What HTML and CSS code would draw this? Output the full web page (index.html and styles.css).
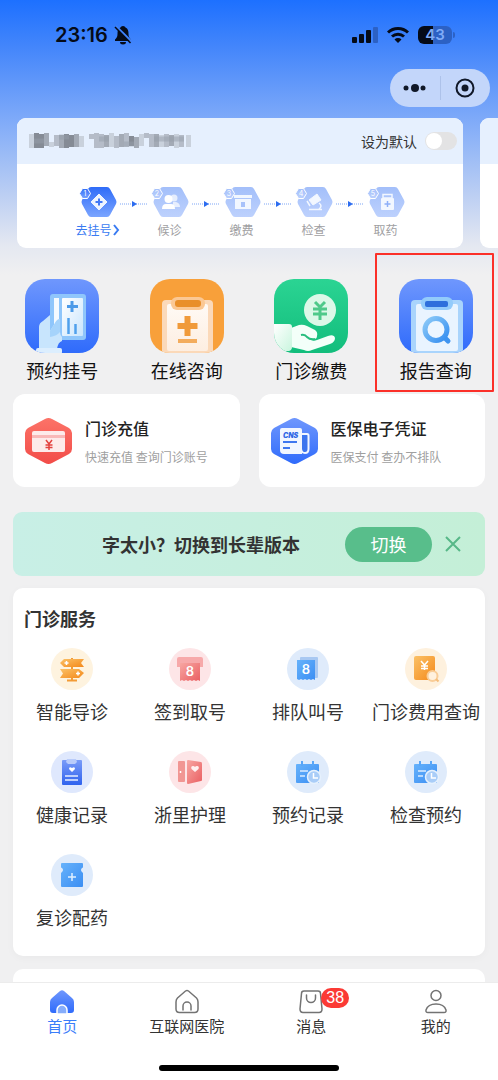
FILE: index.html
```html
<!DOCTYPE html>
<html lang="zh-CN">
<head>
    <meta charset="UTF-8">
    <meta name="viewport" content="width=device-width, initial-scale=1.0">
    <title>首页</title>
    <link rel="stylesheet" href="styles.css">
</head>
<body>
    <!-- 共用渐变 -->
    <svg class="defs" width="0" height="0" aria-hidden="true">
        <defs>
            <linearGradient id="gBlue" x1="0" y1="0" x2="0" y2="1"><stop offset="0" stop-color="#6f97fd"/><stop offset="1" stop-color="#2f6bfb"/></linearGradient>
            <linearGradient id="gStep" x1="0" y1="0" x2="0" y2="1"><stop offset="0" stop-color="#2f6cf8"/><stop offset="1" stop-color="#7ba5ff"/></linearGradient>
            <linearGradient id="gStepOff" x1="0" y1="0" x2="0" y2="1"><stop offset="0" stop-color="#a3bffa"/><stop offset="1" stop-color="#bdd1fd"/></linearGradient>
            <linearGradient id="gGreen" x1="0" y1="0" x2="0" y2="1"><stop offset="0" stop-color="#2bd493"/><stop offset="1" stop-color="#12bd7c"/></linearGradient>
            <linearGradient id="gOrange" x1="0" y1="0" x2="1" y2="1"><stop offset="0" stop-color="#fbc166"/><stop offset="1" stop-color="#f4891b"/></linearGradient>
            <linearGradient id="gRed" x1="0" y1="0" x2="0" y2="1"><stop offset="0" stop-color="#fc7368"/><stop offset="1" stop-color="#f24c48"/></linearGradient>
            <linearGradient id="gPink" x1="0" y1="0" x2="1" y2="1"><stop offset="0" stop-color="#f7a6a2"/><stop offset="1" stop-color="#ea5f62"/></linearGradient>
            <linearGradient id="gSky" x1="0" y1="0" x2="1" y2="1"><stop offset="0" stop-color="#66b2fb"/><stop offset="1" stop-color="#3b8ef3"/></linearGradient>
            <linearGradient id="gRoyal" x1="0" y1="0" x2="0" y2="1"><stop offset="0" stop-color="#7a9cf8"/><stop offset="1" stop-color="#2f62ee"/></linearGradient>
            <linearGradient id="gPaper" x1="0" y1="0" x2="1" y2="1"><stop offset="0" stop-color="#ffffff"/><stop offset="1" stop-color="#c9e5fd"/></linearGradient>
            <linearGradient id="gCream" x1="0" y1="0" x2="0" y2="1"><stop offset="0" stop-color="#fffaf5"/><stop offset="1" stop-color="#fdeee1"/></linearGradient>
            <linearGradient id="gCuff" x1="0" y1="0" x2="1" y2="1"><stop offset="0" stop-color="#ffffff"/><stop offset="1" stop-color="#c9f5de"/></linearGradient>
            <linearGradient id="gLens" x1="0" y1="0" x2="1" y2="1"><stop offset="0" stop-color="#8ccaf8"/><stop offset="1" stop-color="#358ef0"/></linearGradient>
            <clipPath id="tile"><rect width="74" height="74" rx="20"/></clipPath>
            <symbol id="arrow" viewBox="0 0 28 6"><path d="M0 3h28" stroke="#7da5f6" stroke-dasharray="1 1"/><path d="M12 0l5 3-5 3z" fill="#2c6cf0"/></symbol>
            <symbol id="hex" viewBox="0 0 38 32"><path d="M12 1h16q2 0 3 2l6 11q1 2 0 4l-6 11q-1 2-3 2H12q-2 0-3-2L3 18q-1-2 0-4l6-11q1-2 3-2z"/><path d="M3.500 2.500h5l3 5-3 5h-5l-3-5z" stroke="#fff"/></symbol>
            <symbol id="calendar" viewBox="0 0 42 42"><circle cx="21" cy="21" r="21" fill="#dfebfb"/><path d="M10 13h21q1 0 1 1v18H10q-1 0-1-1V14q0-1 1-1z" fill="url(#gSky)"/><path d="M15 10v5M26 10v5" stroke="#58a6f8" stroke-width="2"/><path d="M13 20h8M13 25h5" stroke="#d9ecff" stroke-width="1.500"/><circle cx="27" cy="26" r="6.500" fill="#a9cdf8" stroke="#e6f1fd" stroke-width="1.500"/><path d="M26.500 22v5H31" fill="none" stroke="#fff" stroke-width="1.500"/></symbol>
        </defs>
    </svg>

    <header class="top">
        <!-- 状态栏 -->
        <div class="status-bar">
            <span class="time">23:16</span>
            <svg class="bell" width="18" height="20" viewBox="0 0 18 20" aria-hidden="true">
                <path d="M9 1C7.500 1 7 2 6.500 2.500 4 3.500 3.500 6 3.500 9c0 3-1 4-2.500 5.500V16h16v-1.500c-1.500-1.500-2.500-2.500-2.500-5.500 0-3-.500-5.500-3-6.500C11 2 10.500 1 9 1zM6 17h6a3 2.500 0 0 1-6 0z"/>
                <path d="M2 1l16 16" stroke="#3f82fa" stroke-width="2"/>
                <path d="M1 2l15.500 16" stroke="#050b18" stroke-width="1.500"/>
            </svg>
            <div class="signals">
                <svg width="26" height="18" viewBox="0 0 26 18" aria-hidden="true">
                    <rect x="0" y="11" width="5" height="6" rx="1"/><rect x="7" y="8" width="5" height="9" rx="1"/><rect x="14" y="4" width="5" height="13" rx="1"/><rect x="21" y="1" width="5" height="16" rx="1" fill="#2c61c4"/>
                </svg>
                <svg width="22" height="18" viewBox="0 0 22 18" fill="none" stroke="#050b18" stroke-width="3" aria-hidden="true">
                    <path d="M1 6.500a14.500 14.500 0 0 1 20 0M5 10.500a9 9 0 0 1 12 0"/><path d="M11 17l-3.500-3.500a5 5 0 0 1 7 0z" fill="#050b18" stroke="none"/>
                </svg>
                <span class="battery">43</span>
            </div>
        </div>
        <div class="capsule">
            <button type="button" aria-label="更多">
                <svg width="24" height="10" viewBox="0 0 24 10"><circle cx="3" cy="5" r="2.500"/><circle cx="12" cy="5" r="4"/><circle cx="20" cy="5" r="2.500"/></svg>
            </button>
            <button type="button" aria-label="关闭">
                <svg width="20" height="20" viewBox="0 0 20 20"><circle cx="10" cy="10" r="8.500" fill="none" stroke="#101828" stroke-width="2"/><circle cx="10" cy="10" r="3.500"/></svg>
            </button>
        </div>
    </header>

    <main>
        <!-- 就诊人卡片 -->
        <section class="patients">
            <article class="patient">
                <div class="patient-head">
                    <svg class="masked" width="162" height="16" viewBox="0 0 162 16" role="img" aria-label="就诊人">
                        <g fill="none" stroke-width="5">
                            <path d="M2.500 1v14M22.500 9v5M52.500 3v11M82.500 0v14M112.500 1v12M132.500 2v12M147.500 1v14M159.500 2v12" stroke="#c9d1dc"/>
                            <path d="M7.500 0v15M12.500 1v14M37.500 1v14M42.500 2v12M102.500 3v10" stroke="#858b95"/>
                            <path d="M17.500 0v13M32.500 2v13M47.500 1v13M77.500 2v12M92.500 1v13M107.500 4v11M127.500 1v13M142.500 2v11" stroke="#a3aab5"/>
                            <path d="M27.500 2v11M62.500 1v5M67.500 0v15M72.500 1v14M87.500 3v12M97.500 0v14M117.500 0v5M122.500 1v13M137.500 1v13M152.500 2v12" stroke="#b5bcc8"/>
                            <path d="M5 8h10M30 4h10M70 6h10M95 11h10M125 6h30" stroke="#969da9" stroke-opacity=".5"/>
                        </g>
                    </svg>
                    <label class="default-switch">设为默认 <input type="checkbox" role="switch"></label>
                </div>
                <ol class="steps">
                    <li class="active">
                        <svg width="38" height="32" viewBox="0 0 38 32" aria-hidden="true"><use href="#hex" fill="url(#gStep)"/><text class="num" x="6" y="10">1</text><path d="M20 8l8 8-8 8-8-8z" fill="#eef4ff" stroke="#eef4ff" stroke-linejoin="round"/><path d="M20 12.500v7M16.500 16h7" stroke="#4379f5" stroke-width="2"/></svg>
                        <a href="#">去挂号<svg width="8" height="12" viewBox="0 0 8 12" fill="none" stroke="#3a7bf2" stroke-width="2"><path d="M2 1l4 5-4 5"/></svg></a>
                    </li>
                    <li class="line"><svg width="28" height="6"><use href="#arrow"/></svg></li>
                    <li>
                        <svg width="38" height="32" viewBox="0 0 38 32" aria-hidden="true"><use href="#hex" fill="url(#gStepOff)"/><text class="num" x="6" y="10">2</text><g fill="#fff"><g opacity=".7"><circle cx="23" cy="12" r="3.500"/><path d="M22 16h3q4 1 4 5h-7z"/></g><circle cx="17.500" cy="13" r="4"/><path d="M11 23q0-5 4-5h5q4 0 4 5z"/></g></svg>
                        <span>候诊</span>
                    </li>
                    <li class="line"><svg width="28" height="6"><use href="#arrow"/></svg></li>
                    <li>
                        <svg width="38" height="32" viewBox="0 0 38 32" aria-hidden="true"><use href="#hex" fill="url(#gStepOff)"/><text class="num" x="6" y="10">3</text><path d="M11 9h18v3H11zM12 13h16v10H12z" fill="#f2f7ff"/><path d="M18 16h4v5h-4z" fill="#a8c2fa"/></svg>
                        <span>缴费</span>
                    </li>
                    <li class="line"><svg width="28" height="6"><use href="#arrow"/></svg></li>
                    <li>
                        <svg width="38" height="32" viewBox="0 0 38 32" aria-hidden="true"><use href="#hex" fill="url(#gStepOff)"/><text class="num" x="6" y="10">4</text><path d="M14 14l8-6 4 6-8 5z" fill="#f2f7ff" stroke="#f2f7ff" stroke-linejoin="round"/><path d="M12 15l3 5M24 17q4 3 0 6M14 23.500h13" fill="none" stroke="#f2f7ff" stroke-width="1.500"/></svg>
                        <span>检查</span>
                    </li>
                    <li class="line"><svg width="28" height="6"><use href="#arrow"/></svg></li>
                    <li>
                        <svg width="38" height="32" viewBox="0 0 38 32" aria-hidden="true"><use href="#hex" fill="url(#gStepOff)"/><text class="num" x="6" y="10">5</text><path d="M16 8.500h9V12h-9z" fill="none" stroke="#f2f7ff" stroke-width="1.500"/><rect x="14" y="12" width="13" height="12" rx="1" fill="#f2f7ff"/><path d="M20.500 15v6M17.500 18h6" stroke="#8daff8" stroke-width="1.500"/></svg>
                        <span>取药</span>
                    </li>
                </ol>
            </article>
            <article class="patient">
                <div class="patient-head"></div>
            </article>
        </section>

        <!-- 快捷入口 -->
        <nav class="quick">
            <a href="#">
                <svg width="74" height="74" viewBox="0 0 74 74" aria-hidden="true"><g clip-path="url(#tile)"><rect width="74" height="74" fill="url(#gBlue)"/><rect x="25" y="15" width="36" height="46" rx="3" fill="#8fc6fb"/><rect x="29" y="19" width="5" height="38" fill="#f4faff"/><rect x="37" y="19" width="21" height="38" rx="1" fill="url(#gPaper)"/><path d="M47 22v11M42 27.500h11" stroke="#4b9ae8" stroke-width="3"/><path d="M43.500 39v16M50.500 45v10" stroke="#4fa0ec" stroke-width="2.500"/><path d="M14 70V48q0-4 4-6l7-6v16l5-8q2-4 5-4v13q0 3 2 5v4q-4 1-5 8z" fill="#c8e5fd"/><path d="M25 52l5-8q2-4 5-4v13q-3 4-10 5z" fill="#a5d3fb"/><rect x="11" y="69" width="26" height="6" rx="2" fill="#dceefe"/></g></svg>
                <span>预约挂号</span>
            </a>
            <a href="#">
                <svg width="74" height="74" viewBox="0 0 74 74" aria-hidden="true"><g clip-path="url(#tile)"><rect width="74" height="74" fill="#f8a03a"/><rect x="12" y="21" width="51" height="58" rx="4" fill="#fbd9b9"/><rect x="17" y="25" width="41" height="47" rx="2" fill="url(#gCream)"/><rect x="21" y="18" width="34" height="13" rx="6" fill="#fbc894"/><rect x="25" y="21" width="26" height="7" rx="3" fill="#e98f2a"/><path d="M37.500 37v20M27.500 47h20" stroke="#f09a3a" stroke-width="6"/><path d="M28 62h19" stroke="#f3ac5d" stroke-width="4"/></g></svg>
                <span>在线咨询</span>
            </a>
            <a href="#">
                <svg width="74" height="74" viewBox="0 0 74 74" aria-hidden="true"><g clip-path="url(#tile)"><rect width="74" height="74" fill="url(#gGreen)"/><circle cx="46" cy="31" r="16" fill="#dcf8e8"/><path d="M41 23l5 5 5-5M39 30h14M39 35h14M46 28v13" fill="none" stroke="#4fc98a" stroke-width="3"/><path d="M17 49l8-3q4-1 8 1l8 4q3 2 2 6 0 3-3 3l-6-1q4 4 9 2l11-4q6-2 7 2 0 4-5 6l-18 6q-4 2-8 0l-13-3z" fill="#f3fff9"/><path d="M27 56q4-1 6 2 3 3 8 2" fill="none" stroke="#27bd7e" stroke-width="2"/><path d="M0 45h15q3 0 3 3v20q0 3-3 4H0z" fill="url(#gCuff)"/></g></svg>
                <span>门诊缴费</span>
            </a>
            <a href="#" class="marked">
                <svg width="74" height="74" viewBox="0 0 74 74" aria-hidden="true"><g clip-path="url(#tile)"><rect width="74" height="74" fill="url(#gBlue)"/><rect x="12" y="21" width="52" height="58" rx="4" fill="#a9d4fc"/><rect x="17" y="25" width="42" height="47" rx="2" fill="#e9f4ff"/><rect x="22" y="18" width="32" height="13" rx="6" fill="#93cbfb"/><rect x="26" y="22" width="23" height="6" rx="2" fill="#2e6fdc"/><path d="M44 57l5 5" stroke="#3f94f0" stroke-width="5" stroke-linecap="round"/><circle cx="37" cy="50.500" r="11" fill="#edf6ff" stroke="url(#gLens)" stroke-width="5"/></g></svg>
                <span>报告查询</span>
            </a>
        </nav>

        <section class="entries">
            <a class="entry" href="#">
                <svg width="47" height="48" viewBox="0 0 47 48" aria-hidden="true"><path d="M20 2q3.500-2 7 0l17 9q3 2 3 5v16q0 3-3 5l-17 9q-3.500 2-7 0L3 37q-3-2-3-5V16q0-3 3-5z" fill="url(#gRed)"/><rect x="7" y="14" width="33" height="21" rx="2" fill="#fdebea"/><path d="M7 18h33v3H7z" fill="#f9b9b8"/><path d="M21 23l3 4 3-4M20.500 28h7M20.500 30.500h7M24 27v6" fill="none" stroke="#e3423f" stroke-width="1.500"/></svg>
                <div>
                    <h3>门诊充值</h3>
                    <p>快速充值 查询门诊账号</p>
                </div>
            </a>
            <a class="entry" href="#">
                <svg width="47" height="48" viewBox="0 0 47 48" aria-hidden="true"><path d="M20 2q3.500-2 7 0l17 9q3 2 3 5v16q0 3-3 5l-17 9q-3.500 2-7 0L3 37q-3-2-3-5V16q0-3 3-5z" fill="url(#gBlue)"/><path d="M11 11h18q2 0 2 2v24H13q-4 0-4-4V13q0-2 2-2z" fill="#f1f6ff"/><path d="M30 17h6q1.500 0 1.500 1.500V32q0 4-3.500 4t-4-4z" fill="#3b74ee" stroke="#f1f6ff" stroke-width="2"/><text class="cns" x="12" y="21">CNS</text><path d="M12 25h14M12 31h7" stroke="#3e77ef" stroke-width="2"/></svg>
                <div>
                    <h3>医保电子凭证</h3>
                    <p>医保支付 查办不排队</p>
                </div>
            </a>
        </section>

        <!-- 长辈版提示 -->
        <section class="banner">
            <strong>字太小？切换到长辈版本</strong>
            <button type="button" class="switch-btn">切换</button>
            <button type="button" class="close-btn" aria-label="关闭提示">
                <svg width="16" height="16" viewBox="0 0 16 16" stroke="#57b888" stroke-width="2"><path d="M1 1l14 14M15 1L1 15"/></svg>
            </button>
        </section>

        <!-- 门诊服务 -->
        <section class="services">
            <h2>门诊服务</h2>
            <div class="service-grid">
                <a href="#">
                    <svg width="42" height="42" viewBox="0 0 42 42" aria-hidden="true"><circle cx="21" cy="21" r="21" fill="#fef3df"/><path d="M21 10v22M16 32.500h10" stroke="#f39b35" stroke-width="2"/><path d="M13 11h20l-3 4 3 4H13l-4-4z" fill="url(#gOrange)"/><path d="M9 21h19l5 4-5 5H9l3-4.500z" fill="url(#gOrange)"/><path d="M15.500 13v4M13.500 15h4M27 23.500v4M25 25.500h4" stroke="#fff" stroke-width="1.500"/></svg>
                    <span>智能导诊</span>
                </a>
                <a href="#">
                    <svg width="42" height="42" viewBox="0 0 42 42" aria-hidden="true"><circle cx="21" cy="21" r="21" fill="#fde5e7"/><path d="M10 9h22q2 0 2 2v8h-3v-4H11v4H8v-8q0-2 2-2z" fill="#f7a9aa"/><path d="M11 15h20v18l-2-1-2 1-2-1-2 1-2-1-2 1-2-1-2 1-2-1-2 1z" fill="url(#gPink)"/><text class="ticket" x="21" y="28">8</text></svg>
                    <span>签到取号</span>
                </a>
                <a href="#">
                    <svg width="42" height="42" viewBox="0 0 42 42" aria-hidden="true"><circle cx="21" cy="21" r="21" fill="#dfebfb"/><rect x="13" y="9" width="18" height="21" rx="1" fill="#a8c8f2"/><path d="M10 12h18v20l-2-1-2 1-2-1-2 1-2-1-2 1-2-1-2 1-2-1z" fill="url(#gSky)"/><text class="ticket" x="19" y="26">8</text></svg>
                    <span>排队叫号</span>
                </a>
                <a href="#">
                    <svg width="42" height="42" viewBox="0 0 42 42" aria-hidden="true"><circle cx="21" cy="21" r="21" fill="#fef1de"/><rect x="9" y="8" width="21" height="24" rx="2" fill="url(#gOrange)"/><path d="M16 13l3.500 4 3.500-4M16 18h7M16 20.500h7M19.500 17v5" fill="none" stroke="#fff" stroke-width="1.500"/><circle cx="27.500" cy="28" r="5" fill="#fff1df" stroke="#f9cd98" stroke-width="2"/><path d="M31 31l2.500 2.500" stroke="#f5bd7b" stroke-width="2"/></svg>
                    <span>门诊费用查询</span>
                </a>
                <a href="#">
                    <svg width="42" height="42" viewBox="0 0 42 42" aria-hidden="true"><circle cx="21" cy="21" r="21" fill="#dfe8fd"/><rect x="11" y="9" width="20" height="25" rx="1" fill="url(#gRoyal)"/><path d="M16 8h9l1 3-2 2h-7l-2-2z" fill="#b9ccfb"/><path d="M21 21l-3-3q0-3 3-1 3-2 3 1z" fill="#fff"/><path d="M14 25h13M14 29h13" stroke="#e6eeff" stroke-width="1.500"/></svg>
                    <span>健康记录</span>
                </a>
                <a href="#">
                    <svg width="42" height="42" viewBox="0 0 42 42" aria-hidden="true"><circle cx="21" cy="21" r="21" fill="#fde5e7"/><rect x="9" y="10" width="7" height="21" rx="1" fill="#f19693"/><path d="M19 9l13 2q1 0 1 2v16q0 1-1 1l-13 3q-1 0-1-1V10q0-1 1-1z" fill="url(#gPink)"/><path d="M26 21l-3.500-3q-1-3 1.500-3 1.500 0 2 1 .500-1 2-1 2.500 0 1.500 3z" fill="#fff0f0"/><path d="M11.500 20v2" stroke="#fff" stroke-width="1.500"/></svg>
                    <span>浙里护理</span>
                </a>
                <a href="#">
                    <svg width="42" height="42" aria-hidden="true"><use href="#calendar"/></svg>
                    <span>预约记录</span>
                </a>
                <a href="#">
                    <svg width="42" height="42" aria-hidden="true"><use href="#calendar"/></svg>
                    <span>检查预约</span>
                </a>
                <a href="#">
                    <svg width="42" height="42" viewBox="0 0 42 42" aria-hidden="true"><circle cx="21" cy="21" r="21" fill="#dfebfb"/><path d="M11 9h20q1 0 1 1v3q0 1-1 1-2 2 0 4l1 1v13q0 1-1 1H11q-1 0-1-1V19l1-1q2-2 0-4-1 0-1-1v-3q0-1 1-1z" fill="url(#gSky)"/><path d="M21 19v8M17 23h8" stroke="#dff0ff" stroke-width="1.500"/></svg>
                    <span>复诊配药</span>
                </a>
            </div>
        </section>

        <section class="next-panel"></section>
    </main>

    <!-- 底部导航 -->
    <footer class="tabbar">
        <nav class="tabs">
            <a href="#" class="current">
                <svg width="26" height="26" viewBox="0 0 26 26" aria-hidden="true"><path d="M11 2q2-1.500 4 0l8 7q2 1.500 2 4v8q0 3-3 3H4q-3 0-3-3v-8q0-2.500 2-4z" fill="url(#gBlue)"/><path d="M8 25v-4a5 5 0 0 1 10 0v4z" fill="#86adfb" stroke="#fff" stroke-width="1.500"/></svg>
                <span>首页</span>
            </a>
            <a href="#">
                <svg width="26" height="26" viewBox="0 0 26 26" fill="none" stroke="#737373" stroke-width="1.500" aria-hidden="true"><path d="M11.500 2q1.500-1 3 0l8 7q1.500 1.500 1.500 4v7q0 3.500-3.500 3.500h-15Q2 23.500 2 20v-7q0-2.500 1.500-4z"/><path d="M9 21v-4a4 4 0 0 1 8 0v4" stroke-linecap="round"/></svg>
                <span>互联网医院</span>
            </a>
            <a href="#">
                <svg width="26" height="26" viewBox="0 0 26 26" fill="none" stroke="#737373" stroke-width="1.500" aria-hidden="true"><path d="M6 2h14q2.500 0 2.500 2.500L24 20q0 3.500-3 3.500H5q-3 0-3-3.500L3.500 4.500Q3.500 2 6 2z"/><path d="M8.500 6v3a4.500 4.500 0 0 0 9 0V6" stroke-linecap="round"/></svg>
                <span>消息</span>
                <em class="badge">38</em>
            </a>
            <a href="#">
                <svg width="26" height="26" viewBox="0 0 26 26" fill="none" stroke="#737373" stroke-width="1.500" aria-hidden="true"><circle cx="13" cy="6.500" r="5"/><path d="M5 23.500q-2.500 0-2-2.500Q5 15 13 15t10 6q.500 2.500-2 2.500z"/></svg>
                <span>我的</span>
            </a>
        </nav>
        <div class="home-indicator"></div>
    </footer>
</body>
</html>
```

FILE: styles.css
```css
* {
    margin: 0;
    padding: 0;
    box-sizing: border-box;
}

body {
    min-height: 100vh;
    display: flex;
    flex-direction: column;
    font-family: "Noto Sans CJK SC", "Noto Sans", sans-serif;
    color: #333;
    background: #f0f0f1 linear-gradient(180deg, #1d70ff 0, #4285fb 45px, #7ba8f9 115px, #bccff3 195px, #e4e8f1 245px, #f0f0f1 275px) no-repeat;
    overflow-x: hidden;
}

a {
    color: inherit;
    text-decoration: none;
}

button {
    border: none;
    background: none;
    font-family: inherit;
    cursor: pointer;
}

svg {
    display: block;
    flex: none;
}

.defs {
    position: absolute;
}

/* 状态栏 */
.status-bar {
    height: 69px;
    padding: 0 46px 0 55px;
    display: flex;
    align-items: center;
    color: #050b18;
    fill: #050b18;
}

.time {
    font: 600 20px/24px Inter, sans-serif;
}

.bell {
    margin-left: 6px;
}

.signals {
    margin-left: auto;
    display: flex;
    align-items: center;
    gap: 9px;
}

.battery {
    width: 34px;
    height: 18px;
    border-radius: 6px;
    background: linear-gradient(90deg, #050b18 44%, #2c61c4 44%);
    color: #7fabf8;
    font: 600 15px/18px Inter, sans-serif;
    text-align: center;
    position: relative;
}

.battery::after {
    content: "";
    position: absolute;
    left: 35px;
    top: 6px;
    width: 2px;
    height: 6px;
    border-radius: 0 2px 2px 0;
    background: #2c61c4;
}

/* 小程序胶囊 */
.capsule {
    width: 100px;
    height: 38px;
    margin: 0 8px 11px auto;
    border-radius: 19px;
    background: #c3d6fa;
    display: flex;
    align-items: center;
    fill: #101828;
}

.capsule button {
    flex: 1;
    height: 24px;
    display: flex;
    align-items: center;
    justify-content: center;
}

.capsule button + button {
    border-left: 1px solid #adc2ea;
}

main {
    flex: 1;
    display: flex;
    flex-direction: column;
}

/* 就诊人卡片，可横向滑动 */
.patients {
    display: flex;
    gap: 17px;
    padding-left: 17px;
    overflow: hidden;
}

.patient {
    flex: 0 0 calc(100% - 35px);
    border-radius: 9px;
    background: #fff;
    overflow: hidden;
}

.patient-head {
    height: 46px;
    padding: 0 6px 0 12px;
    display: flex;
    align-items: center;
    justify-content: space-between;
    background: #e6f0fe;
}

.default-switch {
    display: flex;
    align-items: center;
    gap: 8px;
    font-size: 14px;
}

.default-switch input {
    appearance: none;
    width: 32px;
    height: 18px;
    border-radius: 9px;
    background: #e3e3e4;
}

.default-switch input::before {
    content: "";
    display: block;
    width: 16px;
    height: 16px;
    margin: 1px;
    border-radius: 50%;
    background: #fff;
}

.default-switch input:checked {
    background: #3a7bf2;
}

.default-switch input:checked::before {
    margin-left: 15px;
}

.steps {
    list-style: none;
    display: flex;
    justify-content: center;
    padding: 22px 0 10px 3px;
    font-size: 12px;
    line-height: 16px;
    color: #a0a0a2;
}

.steps li {
    width: 44px;
    display: flex;
    flex-direction: column;
    align-items: center;
    gap: 4px;
    white-space: nowrap;
}

.steps .line {
    width: 28px;
    padding-top: 15px;
}

.steps a {
    display: flex;
    align-items: center;
    color: #3a7bf2;
}

.num {
    font: 400 7px Inter, sans-serif;
    fill: #fff;
    text-anchor: middle;
}

/* 快捷入口 */
.quick {
    display: grid;
    grid-template-columns: repeat(4, 1fr);
    padding-top: 31px;
    font-size: 18px;
    line-height: 26px;
    color: #111;
}

.quick a {
    position: relative;
    display: flex;
    flex-direction: column;
    align-items: center;
    gap: 4px;
    padding-bottom: 11px;
}

/* 红框标注 */
.marked::after {
    content: "";
    position: absolute;
    inset: -26px 4px 2px 1px;
    border: 2px solid #fb3029;
    border-radius: 1px;
}

.entries {
    display: grid;
    grid-template-columns: 1fr 1fr;
    gap: 19px;
    padding: 0 13px;
}

.entry {
    height: 93px;
    padding-left: 12px;
    display: flex;
    align-items: center;
    gap: 13px;
    border-radius: 12px;
    background: #fff;
}

.entry h3 {
    font-size: 16px;
    line-height: 24px;
    font-weight: 500;
    color: #222;
    margin-bottom: 8px;
}

.entry p {
    font-size: 12px;
    line-height: 18px;
    color: #a0a0a0;
}

.cns {
    font: italic 900 7px Inter, sans-serif;
    fill: #3068e6;
}

/* 长辈版提示条 */
.banner {
    height: 64px;
    margin: 25px 13px 12px;
    padding-right: 24px;
    display: flex;
    align-items: center;
    justify-content: flex-end;
    border-radius: 9px;
    background: linear-gradient(90deg, #c8efe6, #c4efd7);
}

.banner strong {
    font-size: 18px;
    font-weight: 700;
    margin-right: 45px;
}

.switch-btn {
    width: 87px;
    height: 35px;
    border-radius: 18px;
    background: #58be8b;
    color: #fff;
    font-size: 18px;
    line-height: 26px;
}

.close-btn {
    margin-left: 13px;
}

/* 门诊服务 */
.services {
    margin: 0 13px 13px;
    padding: 17px 0 26px;
    border-radius: 10px;
    background: #fff;
    box-shadow: 0 2px 8px rgba(0, 0, 0, 0.03);
}

.services h2 {
    font-size: 18px;
    line-height: 26px;
    font-weight: 700;
    padding-left: 11px;
    margin-bottom: 17px;
}

.service-grid {
    display: grid;
    grid-template-columns: repeat(4, 1fr);
    row-gap: 27px;
    font-size: 18px;
    line-height: 26px;
}

.service-grid a {
    display: flex;
    flex-direction: column;
    align-items: center;
    gap: 8px;
    white-space: nowrap;
}

.ticket {
    font: 600 13px Inter, sans-serif;
    fill: #fff;
    text-anchor: middle;
}

.next-panel {
    flex: 1;
    min-height: 13px;
    margin: 0 13px;
    border-radius: 10px 10px 0 0;
    background: #fff;
}

/* 底部导航 */
.tabbar {
    position: sticky;
    bottom: 0;
    background: #fff;
    border-top: 1px solid #ececec;
    padding: 6px 0 9px;
}

.tabs {
    display: grid;
    grid-template-columns: repeat(4, 1fr);
    font-size: 15px;
    line-height: 22px;
}

.tabs a {
    position: relative;
    display: flex;
    flex-direction: column;
    align-items: center;
}

.tabs .current {
    color: #3a7dfa;
}

.badge {
    position: absolute;
    top: -1px;
    left: calc(50% + 10px);
    width: 28px;
    border-radius: 10px;
    background: #fb3a35;
    color: #fff;
    font: 400 16px/20px "Liberation Sans", sans-serif;
    text-align: center;
}

.home-indicator {
    width: 36%;
    height: 6px;
    margin: 28px auto 0;
    border-radius: 3px;
    background: #000;
}
```
